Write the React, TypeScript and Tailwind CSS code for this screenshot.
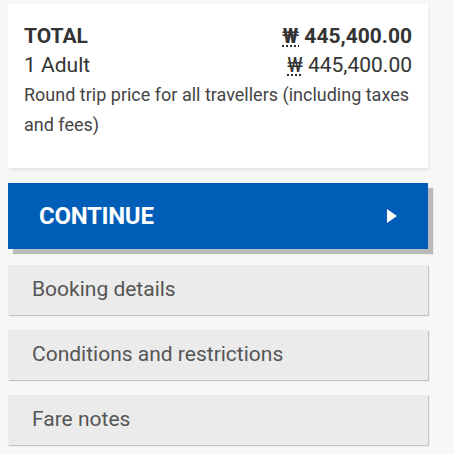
const items = ['Booking details', 'Conditions and restrictions', 'Fare notes']

function Won() {
  return (
    <abbr title="KRW" className="underline decoration-dotted underline-offset-2">
      ₩
    </abbr>
  )
}

export default function App() {
  return (
    <div
      className="w-[454px] h-[454px] bg-[#f7f7f7] pt-[4px] pl-[8px] pr-[26px] overflow-hidden"
      style={{ fontFamily: 'Roboto, "Liberation Sans", sans-serif' }}
    >
      <div className="bg-white shadow-[1px_2px_3px_rgba(0,0,0,0.08)] pt-[18px] pb-[28px] px-[16px] text-[#333]">
        <div className="flex justify-between text-[21px] leading-[29px] font-bold">
          <span>TOTAL</span>
          <span>
            <Won /> 445,400.00
          </span>
        </div>
        <div className="flex justify-between text-[21px] leading-[29px]">
          <span>1 Adult</span>
          <span>
            <Won /> 445,400.00
          </span>
        </div>
        <p className="text-[18px] leading-[30px] text-[#444]">
          Round trip price for all travellers (including taxes and fees)
        </p>
      </div>

      <button className="mt-[15px] w-full h-[66px] bg-[#005eb8] shadow-[5px_5px_1px_#bababa] flex items-center justify-between pl-[31px] pr-[31px] text-white">
        <span className="text-[24px] font-bold tracking-[-0.3px]">CONTINUE</span>
        <svg width="10" height="14" viewBox="0 0 10 14">
          <polygon points="0,0 10,7 0,14" fill="white" />
        </svg>
      </button>

      <div className="mt-[16px] flex flex-col gap-[15px]">
        {items.map((label) => (
          <div
            key={label}
            className="h-[50px] bg-[#ebebeb] shadow-[1px_1px_1px_#c4c4c4] flex items-center pl-[24px] text-[21px] text-[#555]"
          >
            {label}
          </div>
        ))}
      </div>
    </div>
  )
}
